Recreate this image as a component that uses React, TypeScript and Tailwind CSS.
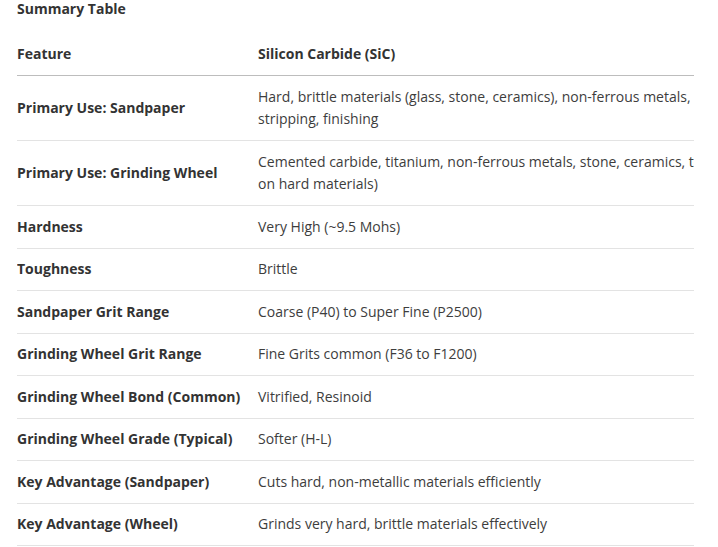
import * as React from "react";

const rows: { feature: string; sic: string[]; alox: string }[] = [
  {
    feature: "Primary Use: Sandpaper",
    sic: [
      "Hard, brittle materials (glass, stone, ceramics), non-ferrous metals, paint",
      "stripping, finishing",
    ],
    alox: "Wood, metal, general purpose sanding",
  },
  {
    feature: "Primary Use: Grinding Wheel",
    sic: [
      "Cemented carbide, titanium, non-ferrous metals, stone, ceramics, tool grinding (mainly",
      "on hard materials)",
    ],
    alox: "Steel, iron, general metal grinding",
  },
  { feature: "Hardness", sic: ["Very High (~9.5 Mohs)"], alox: "High (~9 Mohs)" },
  { feature: "Toughness", sic: ["Brittle"], alox: "Tough" },
  { feature: "Sandpaper Grit Range", sic: ["Coarse (P40) to Super Fine (P2500)"], alox: "Coarse to Fine" },
  { feature: "Grinding Wheel Grit Range", sic: ["Fine Grits common (F36 to F1200)"], alox: "Wide range" },
  { feature: "Grinding Wheel Bond (Common)", sic: ["Vitrified, Resinoid"], alox: "Vitrified, Resinoid" },
  { feature: "Grinding Wheel Grade (Typical)", sic: ["Softer (H-L)"], alox: "Medium to Hard" },
  {
    feature: "Key Advantage (Sandpaper)",
    sic: ["Cuts hard, non-metallic materials efficiently"],
    alox: "Durable, long-lasting",
  },
  {
    feature: "Key Advantage (Wheel)",
    sic: ["Grinds very hard, brittle materials effectively"],
    alox: "Versatile, tough",
  },
];

export default function App() {
  return (
    <div className="min-h-screen bg-white pl-[17px] font-['Open_Sans',sans-serif] text-[14px] text-[#333333]">
      <h3 className="-mt-[2px] text-[14px] font-bold leading-[22px] text-[#333333]">
        Summary Table
      </h3>
      <div className="mt-[13px] w-[677px] overflow-hidden">
        <table className="w-[1100px] table-fixed border-collapse text-left">
          <colgroup>
            <col className="w-[241px]" />
            <col className="w-[600px]" />
            <col />
          </colgroup>
          <thead>
            <tr className="border-b border-[#bdbdbd]">
              <th className="pb-[10px] pr-3 pt-[10px] align-middle font-bold leading-[22px]">Feature</th>
              <th className="pb-[10px] pr-3 pt-[10px] align-middle font-bold leading-[22px]">
                Silicon Carbide (SiC)
              </th>
              <th className="whitespace-nowrap pb-[10px] pt-[10px] align-middle font-bold leading-[22px]">
                Aluminum Oxide
              </th>
            </tr>
          </thead>
          <tbody>
            {rows.map((r) => (
              <tr key={r.feature} className="border-b border-[#e3e3e3]">
                <td className="py-[9.5px] pr-3 align-middle font-bold leading-[22.5px]">{r.feature}</td>
                <td className="whitespace-nowrap py-[9.5px] pr-3 align-middle leading-[22.5px] text-[#3d3d3d]">
                  {r.sic.map((line, i) => (
                    <span key={i} className="block">
                      {line}
                    </span>
                  ))}
                </td>
                <td className="whitespace-nowrap py-[9.5px] align-middle leading-[22.5px] text-[#3d3d3d]">
                  {r.alox}
                </td>
              </tr>
            ))}
          </tbody>
        </table>
      </div>
    </div>
  );
}
